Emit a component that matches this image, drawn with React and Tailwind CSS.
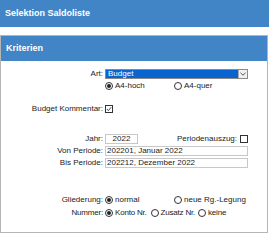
import React from "react";

const Radio = ({ checked }) => (
  <span className="inline-flex h-[8px] w-[8px] shrink-0 items-center justify-center rounded-full border border-[#333] bg-white">
    {checked && <span className="h-[4px] w-[4px] rounded-full bg-[#222]" />}
  </span>
);

const Check = ({ checked }) => (
  <span className="inline-flex h-[8px] w-[8px] shrink-0 items-center justify-center border border-[#333] bg-white">
    {checked && (
      <svg width="6" height="6" viewBox="0 0 6 6">
        <path d="M0.8 3 L2.4 4.6 L5.2 1.2" fill="none" stroke="#333" strokeWidth="0.9" />
      </svg>
    )}
  </span>
);

const Row = ({ label, children, className = "" }) => (
  <div className={`flex items-center whitespace-nowrap ${className}`}>
    <div className="w-[104px] shrink-0 pr-[2px] text-right">{label}</div>
    <div className="flex flex-1 items-center">{children}</div>
  </div>
);

export default function App() {
  return (
    <div
      className="h-[240px] w-[269px] bg-white text-[8px] text-[#222]"
      style={{ fontFamily: '"Liberation Sans", Arial, sans-serif' }}
    >
      <div className="flex h-[27px] items-center bg-[#4285c7] px-[5px] text-[9px] font-bold text-white">
        Selektion Saldoliste
      </div>
      <div className="mt-[8px] h-[198px] w-[268px] border border-[#b5b5b5]">
        <div className="flex h-[25px] items-center bg-[#4285c7] px-[5px] text-[9px] font-bold text-white">
          Kriterien
        </div>
        <div className="pr-[19px]">
          <Row label="Art:" className="mt-[8px] h-[10px]">
            <div className="flex h-[10px] w-[143px] items-center border border-[#8a8a8a] bg-[#0a64d0]">
              <span className="flex-1 pl-[2px] leading-none text-white">Budget</span>
              <span className="flex h-[8px] w-[9px] items-center justify-center border-l border-[#aaa] bg-[#f0f0f0]">
                <svg width="6" height="4" viewBox="0 0 6 4">
                  <path d="M0.5 0.8 L3 3.2 L5.5 0.8" fill="none" stroke="#444" strokeWidth="0.9" />
                </svg>
              </span>
            </div>
          </Row>
          <Row label="" className="mt-[1px] h-[12px]">
            <span className="flex w-[69px] items-center gap-[2px]">
              <Radio checked />A4-hoch
            </span>
            <span className="flex items-center gap-[2px]">
              <Radio />A4-quer
            </span>
          </Row>
          <Row label="Budget Kommentar:" className="mt-[11px] h-[12px]">
            <Check checked />
          </Row>
          <Row label="Jahr:" className="mt-[18px] h-[12px]">
            <span className="flex h-[10px] w-[33px] items-center justify-center border border-[#c8c8c8]">2022</span>
            <span className="ml-auto mr-[3px]">Periodenauszug:</span>
            <Check />
          </Row>
          <Row label="Von Periode:" className="h-[12px]">
            <span className="flex h-[10px] w-[143px] items-center border border-[#c8c8c8] pl-[1px]">
              202201, Januar 2022
            </span>
          </Row>
          <Row label="Bis Periode:" className="h-[12px]">
            <span className="flex h-[10px] w-[143px] items-center border border-[#c8c8c8] pl-[1px]">
              202212, Dezember 2022
            </span>
          </Row>
          <Row label="Gliederung:" className="mt-[24px] h-[13px]">
            <span className="flex w-[69px] items-center gap-[2px]">
              <Radio checked />normal
            </span>
            <span className="flex items-center gap-[2px]">
              <Radio />neue Rg.-Legung
            </span>
          </Row>
          <Row label="Nummer:" className="h-[13px] tracking-[-0.2px]">
            <span className="mr-[4px] flex items-center gap-[2px]">
              <Radio checked />Konto Nr.
            </span>
            <span className="mr-[3px] flex items-center gap-[2px]">
              <Radio />Zusatz Nr.
            </span>
            <span className="flex items-center gap-[2px]">
              <Radio />keine
            </span>
          </Row>
        </div>
      </div>
    </div>
  );
}
